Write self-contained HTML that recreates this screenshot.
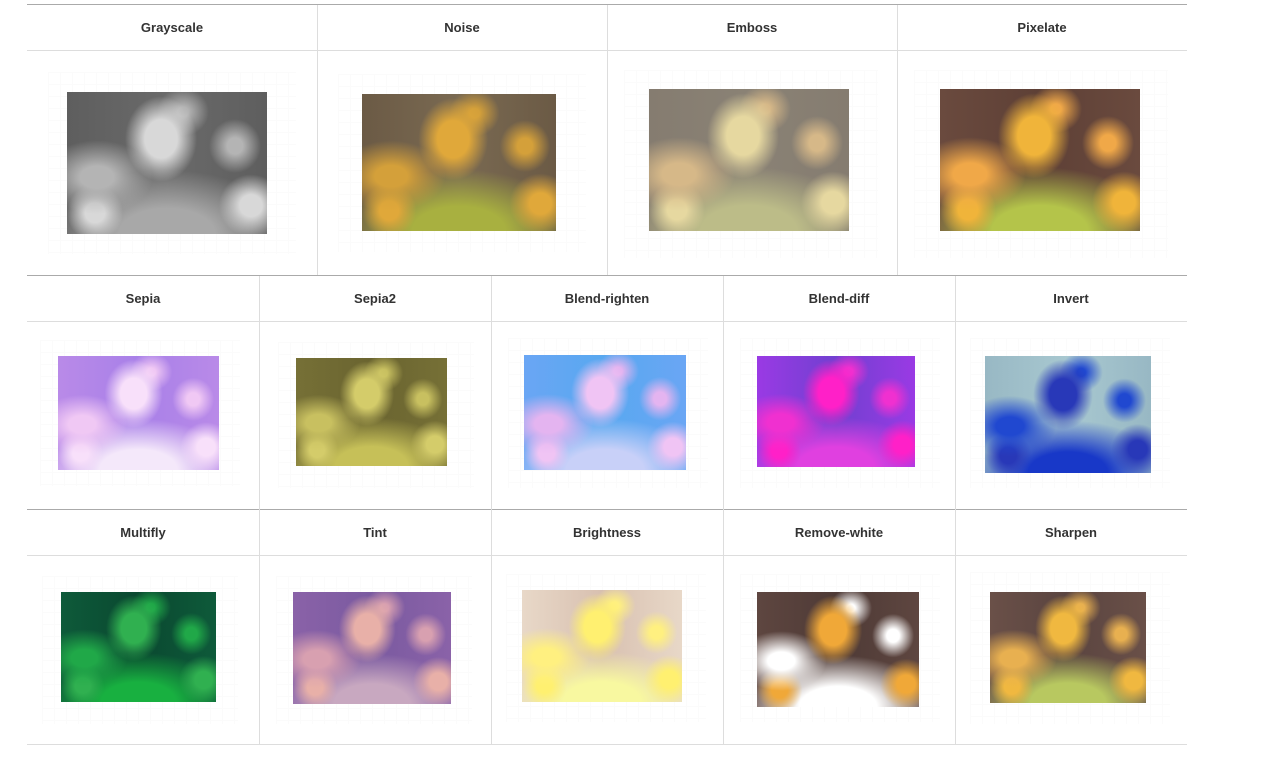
<!DOCTYPE html>
<html><head><meta charset="utf-8"><style>
body{margin:0;background:#fff;width:1265px;height:761px;position:relative;overflow:hidden;font-family:"Liberation Sans",Arial,sans-serif}
.h{position:absolute;height:46px;line-height:47px;text-align:center;font-weight:bold;font-size:13px;color:#333}
.l{position:absolute;background:#ddd}
.L{position:absolute;background:#aaa}
.im{position:absolute;
background:
radial-gradient(ellipse 18% 30% at 47% 33%,var(--f) 45%,transparent 100%),
radial-gradient(ellipse 13% 19% at 84% 38%,var(--s) 30%,transparent 100%),
radial-gradient(ellipse 13% 17% at 58% 14%,var(--s) 20%,transparent 100%),
radial-gradient(ellipse 28% 26% at 15% 60%,var(--s) 30%,transparent 100%),
radial-gradient(ellipse 14% 20% at 14% 85%,var(--f) 35%,transparent 100%),
radial-gradient(ellipse 16% 22% at 92% 80%,var(--f) 35%,transparent 100%),
radial-gradient(ellipse 60% 45% at 50% 100%,var(--g) 40%,transparent 100%),
linear-gradient(to right,var(--a),var(--b) 50%,var(--a)),
var(--a)}
.gr{position:absolute;background-image:linear-gradient(#f4f4f4 1px,transparent 1px),linear-gradient(90deg,#f4f4f4 1px,transparent 1px);background-size:12px 12px;opacity:.35}
</style></head><body>
<div class="L" style="left:27px;top:4px;width:1160px;height:1px"></div>
<div class="l" style="left:27px;top:50px;width:1160px;height:1px"></div>
<div class="L" style="left:27px;top:275px;width:1160px;height:1px"></div>
<div class="l" style="left:27px;top:321px;width:1160px;height:1px"></div>
<div class="L" style="left:27px;top:509px;width:1160px;height:1px"></div>
<div class="l" style="left:27px;top:555px;width:1160px;height:1px"></div>
<div class="l" style="left:27px;top:744px;width:1160px;height:1px"></div>
<div class="l" style="left:317px;top:5px;width:1px;height:270px"></div>
<div class="l" style="left:607px;top:5px;width:1px;height:270px"></div>
<div class="l" style="left:897px;top:5px;width:1px;height:270px"></div>
<div class="l" style="left:259px;top:276px;width:1px;height:468px"></div>
<div class="l" style="left:491px;top:276px;width:1px;height:468px"></div>
<div class="l" style="left:723px;top:276px;width:1px;height:468px"></div>
<div class="l" style="left:955px;top:276px;width:1px;height:468px"></div>
<div class="h" style="left:27px;top:4px;width:290px">Grayscale</div>
<div class="h" style="left:317px;top:4px;width:290px">Noise</div>
<div class="h" style="left:607px;top:4px;width:290px">Emboss</div>
<div class="h" style="left:897px;top:4px;width:290px">Pixelate</div>
<div class="h" style="left:27px;top:275px;width:232px">Sepia</div>
<div class="h" style="left:259px;top:275px;width:232px">Sepia2</div>
<div class="h" style="left:491px;top:275px;width:232px">Blend-righten</div>
<div class="h" style="left:723px;top:275px;width:232px">Blend-diff</div>
<div class="h" style="left:955px;top:275px;width:232px">Invert</div>
<div class="h" style="left:27px;top:509px;width:232px">Multifly</div>
<div class="h" style="left:259px;top:509px;width:232px">Tint</div>
<div class="h" style="left:491px;top:509px;width:232px">Brightness</div>
<div class="h" style="left:723px;top:509px;width:232px">Remove-white</div>
<div class="h" style="left:955px;top:509px;width:232px">Sharpen</div>
<div class="gr" style="left:48px;top:72px;width:248px;height:182px"></div>
<div class="gr" style="left:338px;top:74px;width:248px;height:178px"></div>
<div class="gr" style="left:624px;top:70px;width:254px;height:188px"></div>
<div class="gr" style="left:914px;top:70px;width:254px;height:188px"></div>
<div class="gr" style="left:40px;top:340px;width:200px;height:146px"></div>
<div class="gr" style="left:278px;top:342px;width:196px;height:146px"></div>
<div class="gr" style="left:508px;top:338px;width:200px;height:150px"></div>
<div class="gr" style="left:740px;top:338px;width:200px;height:150px"></div>
<div class="gr" style="left:970px;top:338px;width:200px;height:150px"></div>
<div class="gr" style="left:42px;top:576px;width:196px;height:148px"></div>
<div class="gr" style="left:276px;top:576px;width:196px;height:148px"></div>
<div class="gr" style="left:506px;top:574px;width:200px;height:148px"></div>
<div class="gr" style="left:740px;top:574px;width:200px;height:148px"></div>
<div class="gr" style="left:970px;top:572px;width:200px;height:152px"></div>
<div class="im" style="left:67px;top:92px;width:200px;height:142px;--a:#5e5e5e;--b:#6a6a6a;--f:#d8d8d8;--s:#b4b4b4;--g:#a8a8a8"></div>
<div class="im" style="left:362px;top:94px;width:194px;height:137px;--a:#6b5a45;--b:#7a6a52;--f:#e0a83a;--s:#d4a03a;--g:#a8b040"></div>
<div class="im" style="left:649px;top:89px;width:200px;height:142px;--a:#857c70;--b:#8a8275;--f:#e6d8a0;--s:#d6b888;--g:#bcbc88"></div>
<div class="im" style="left:940px;top:89px;width:200px;height:142px;--a:#6a4a3e;--b:#5e4036;--f:#f0b43a;--s:#f0a848;--g:#b4c44a"></div>
<div class="im" style="left:58px;top:356px;width:161px;height:114px;--a:#b98ae8;--b:#a880e8;--f:#f8e0fa;--s:#f0c8f4;--g:#f4e8fa"></div>
<div class="im" style="left:296px;top:358px;width:151px;height:108px;--a:#767036;--b:#6a6430;--f:#d4cc6a;--s:#c8c060;--g:#c6c058"></div>
<div class="im" style="left:524px;top:355px;width:162px;height:115px;--a:#6aa6f4;--b:#58a8f0;--f:#f0c4f4;--s:#e4b4f0;--g:#c8d0f8"></div>
<div class="im" style="left:757px;top:356px;width:158px;height:111px;--a:#9a3ae4;--b:#7040d0;--f:#ff20c8;--s:#f030d0;--g:#e040e0"></div>
<div class="im" style="left:985px;top:356px;width:166px;height:117px;--a:#98b8c4;--b:#a8c8d0;--f:#2838b8;--s:#2048d0;--g:#1838c8"></div>
<div class="im" style="left:61px;top:592px;width:155px;height:110px;--a:#0e5a3a;--b:#0a4830;--f:#30b050;--s:#20a848;--g:#18b040"></div>
<div class="im" style="left:293px;top:592px;width:158px;height:112px;--a:#8a62a8;--b:#7a5aa0;--f:#e8b0a8;--s:#d8a0b0;--g:#c8a8c0"></div>
<div class="im" style="left:522px;top:590px;width:160px;height:112px;--a:#e8d8c8;--b:#d8c0b0;--f:#fff070;--s:#fff080;--g:#f8f8a0"></div>
<div class="im" style="left:757px;top:592px;width:162px;height:115px;--a:#5e4640;--b:#4e3a36;--f:#f0a838;--s:#ffffff;--g:#ffffff"></div>
<div class="im" style="left:990px;top:592px;width:156px;height:111px;--a:#6a5048;--b:#5a4440;--f:#f0b840;--s:#e8b050;--g:#b8c860"></div>
</body></html>
